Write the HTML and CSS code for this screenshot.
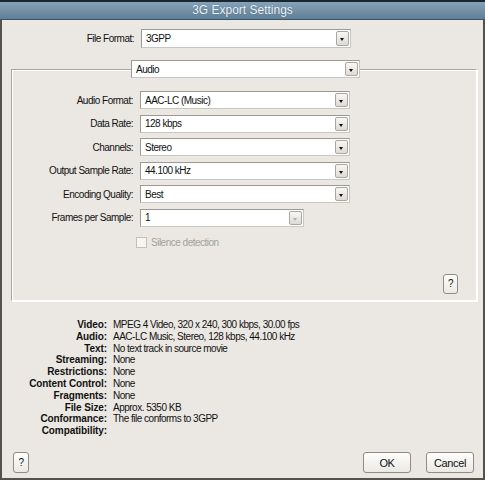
FILE: index.html
```html
<!DOCTYPE html>
<html lang="en">
<head>
    <meta charset="UTF-8">
    <title>3G Export Settings</title>
    <link rel="stylesheet" href="styles.css">
</head>
<body>

<div class="window">
    <div class="titlebar">3G Export Settings</div>

    <div class="row top-row">
        <span class="lbl">File Format:</span>
        <div class="select wide"><span>3GPP</span><i class="arrow"></i></div>
    </div>

    <fieldset class="group">
        <legend>
            <div class="select legend-select"><span>Audio</span><i class="arrow"></i></div>
        </legend>

        <div class="fields">
            <div class="row">
                <span class="lbl">Audio Format:</span>
                <div class="select wide"><span>AAC-LC (Music)</span><i class="arrow"></i></div>
            </div>
            <div class="row">
                <span class="lbl">Data Rate:</span>
                <div class="select wide"><span>128 kbps</span><i class="arrow"></i></div>
            </div>
            <div class="row">
                <span class="lbl">Channels:</span>
                <div class="select wide"><span>Stereo</span><i class="arrow"></i></div>
            </div>
            <div class="row">
                <span class="lbl">Output Sample Rate:</span>
                <div class="select wide"><span>44.100 kHz</span><i class="arrow"></i></div>
            </div>
            <div class="row">
                <span class="lbl">Encoding Quality:</span>
                <div class="select wide"><span>Best</span><i class="arrow"></i></div>
            </div>
            <div class="row">
                <span class="lbl">Frames per Sample:</span>
                <div class="select short"><span>1</span><i class="arrow disabled"></i></div>
            </div>
        </div>

        <div class="check-row">
            <span class="checkbox"></span>
            <span>Silence detection</span>
        </div>

        <div class="help-row">
            <button class="btn help">?</button>
        </div>
    </fieldset>

    <div class="summary">
        <b>Video:</b><span>MPEG 4 Video, 320 x 240, 300 kbps, 30.00 fps</span>
        <b>Audio:</b><span>AAC-LC Music, Stereo, 128 kbps, 44.100 kHz</span>
        <b>Text:</b><span>No text track in source movie</span>
        <b>Streaming:</b><span>None</span>
        <b>Restrictions:</b><span>None</span>
        <b>Content Control:</b><span>None</span>
        <b>Fragments:</b><span>None</span>
        <b>File Size:</b><span>Approx. 5350 KB</span>
        <b>Conformance:</b><span>The file conforms to 3GPP</span>
        <b>Compatibility:</b><span></span>
    </div>

    <div class="footer">
        <button class="btn help-small">?</button>
        <div class="actions">
            <button class="btn action">OK</button>
            <button class="btn action">Cancel</button>
        </div>
    </div>
</div>

</body>
</html>
```

FILE: styles.css
```css
body {
    margin: 0;
    background-color: #ebe8e3;
    font-family: "Liberation Sans", Arial, sans-serif;
    font-size: 10px;
    letter-spacing: -0.5px;
    color: #111;
}

.window {
    width: 485px;
    height: 480px;
    box-sizing: border-box;
    border-left: 2px solid #55524e;
    border-right: 2px solid #55524e;
    border-bottom: 2px solid #55524e;
    display: flex;
    flex-direction: column;
    background-color: #ebe8e3;
}

.titlebar {
    height: 17px;
    margin: 0 -2px;
    border-top: 2px solid #1c2630;
    border-bottom: 1px solid #3e5264;
    background: linear-gradient(#86a2b8, #5f7f98);
    color: #f2f5f7;
    font-size: 12px;
    letter-spacing: 0;
    line-height: 17px;
    text-align: center;
    text-shadow: 0 0 1px #3c5468;
}

/* ligne label + liste */
.row {
    display: flex;
    align-items: center;
    height: 18px;
}

.lbl {
    text-align: right;
    margin-right: 7px;
    flex-shrink: 0;
}

.top-row {
    margin-top: 9px;
    height: 19px;
}

.top-row .lbl {
    width: 132px;
}

.select {
    position: relative;
    box-sizing: border-box;
    height: 100%;
    background-color: #fff;
    border: 1px solid #9d9a95;
    border-right-color: #c9c6c0;
    border-bottom-color: #c9c6c0;
    display: flex;
    align-items: center;
    padding-left: 4px;
}

.select.wide {
    width: 210px;
}

.select.short {
    width: 164px;
}

.arrow {
    position: absolute;
    right: 1px;
    top: 1px;
    bottom: 1px;
    width: 11px;
    border: 1px solid #a9a7a2;
    border-radius: 2px;
    background: linear-gradient(#f8f7f4, #dedbd5);
}

.arrow::after {
    content: "";
    position: absolute;
    left: 3px;
    top: 6px;
    border-left: 2.5px solid transparent;
    border-right: 2.5px solid transparent;
    border-top: 3px solid #111;
}

.arrow.disabled::after {
    border-top-color: #b5b2ad;
}

/* cadre Audio */
.group {
    margin: 12px 6px 0 9px;
    padding: 0 0 6px 0;
    border: 1px solid;
    border-color: #a8a5a0 #fff #fff #a8a5a0;
    box-shadow: 1px 1px 0 #fff, inset 1px 1px 0 #fff;
}

.group legend {
    margin-left: 119px;
    padding: 0;
}

.legend-select {
    width: 229px;
    height: 18px;
}

.fields {
    margin-top: 13px;
    display: flex;
    flex-direction: column;
    gap: 5.6px;
}

.fields .lbl {
    width: 121px;
}

.check-row {
    display: flex;
    align-items: center;
    height: 12px;
    margin: 10px 0 0 124px;
    color: #a3a09b;
}

.checkbox {
    width: 9px;
    height: 9px;
    border: 1px solid #c4c1bb;
    background-color: #f6f5f2;
    margin-right: 4px;
}

.help-row {
    display: flex;
    justify-content: flex-end;
    margin-top: 25px;
    padding-right: 18px;
}

.btn {
    font-family: inherit;
    font-size: 11px;
    letter-spacing: -0.4px;
    color: #111;
    border: 1px solid #8f8c87;
    border-radius: 3px;
    background: linear-gradient(#fdfdfc, #ebe9e4);
    padding: 0;
    cursor: pointer;
}

.help {
    width: 15px;
    height: 20px;
    font-size: 10px;
}

/* résumé */
.summary {
    margin-top: 18px;
    display: grid;
    grid-template-columns: 105px 1fr;
    column-gap: 6px;
    line-height: 11.8px;
}

.summary b {
    text-align: right;
    letter-spacing: -0.1px;
}

.footer {
    margin-top: auto;
    display: flex;
    justify-content: space-between;
    align-items: flex-end;
    padding: 0 9px 5px 11px;
}

.help-small {
    width: 16px;
    height: 21px;
    font-size: 10px;
}

.actions {
    display: flex;
    gap: 15px;
}

.action {
    width: 48px;
    height: 21px;
}
```
